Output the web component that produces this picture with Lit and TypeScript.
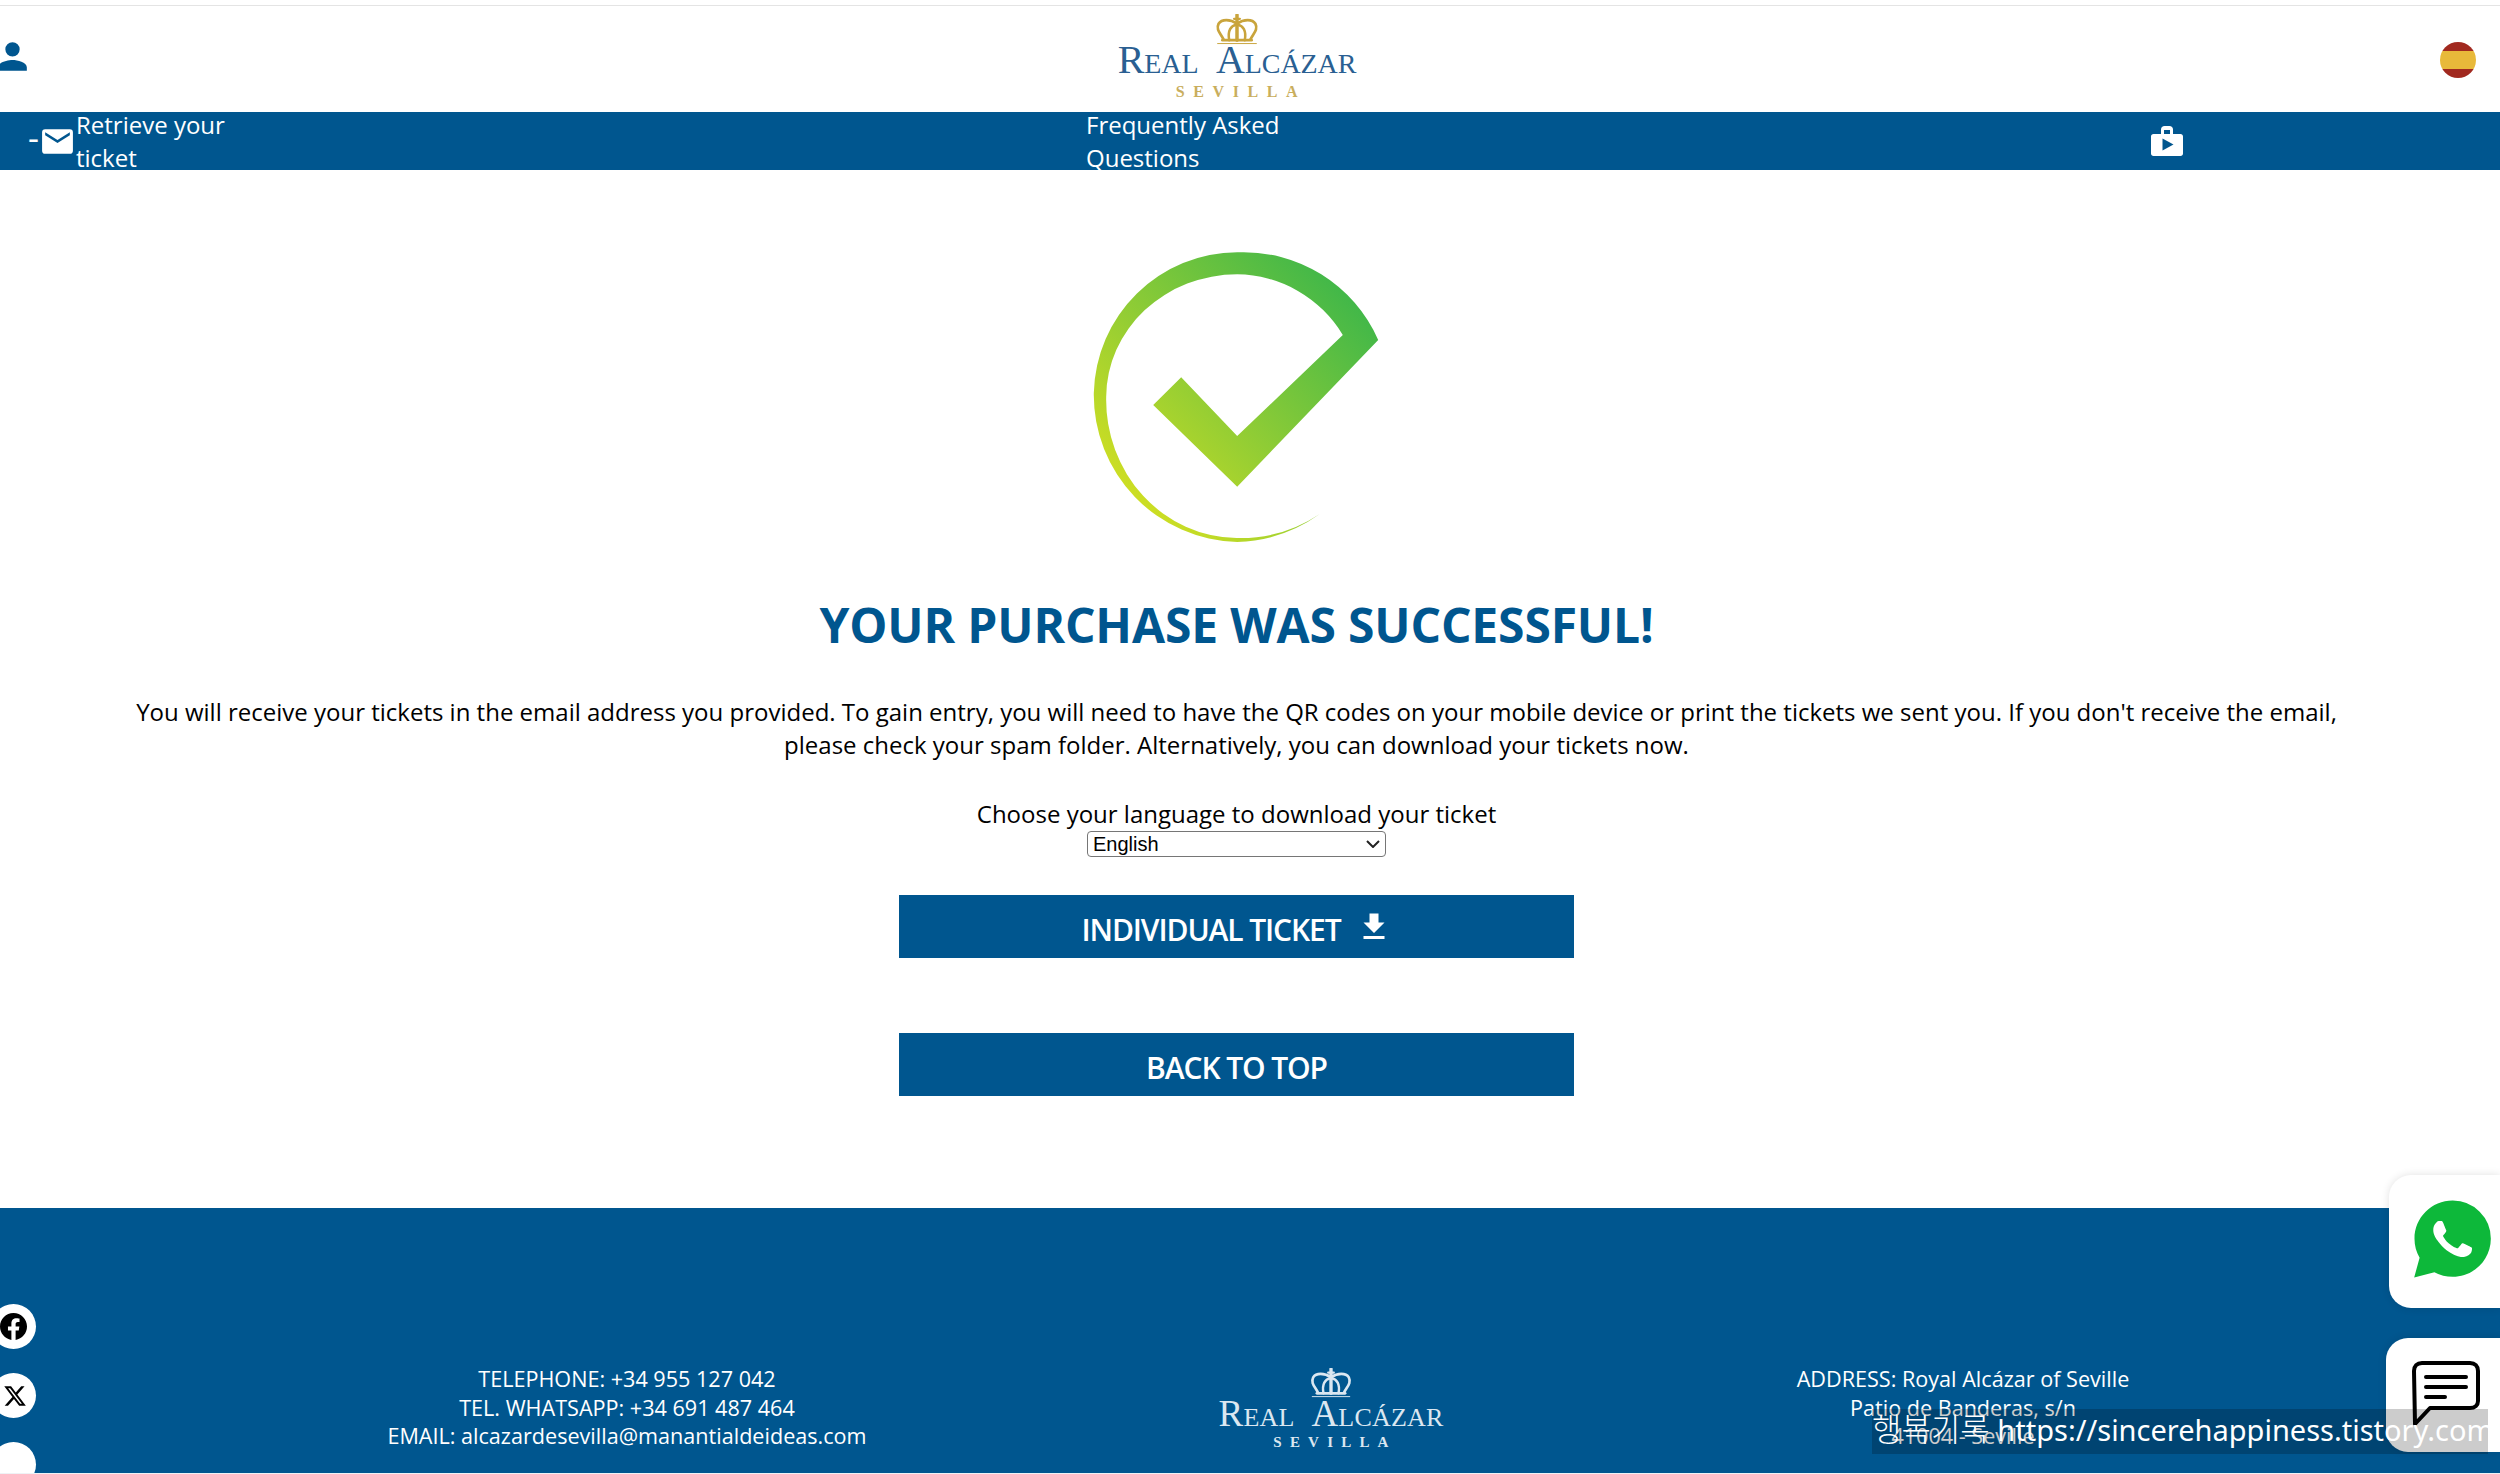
import { LitElement, html, css, svg } from "lit";
import { customElement } from "lit/decorators.js";

const crown = svg`
  <g fill="none" stroke="currentColor" stroke-linecap="round">
    <path d="M22 1v26" stroke-width="3.600"/>
    <path d="M19 5h6" stroke-width="2.400"/>
    <path d="M22 10C15 5 6 5 3 10c-3 6 2 10 5 16" stroke-width="2.800"/>
    <path d="M22 10c7-5 16-5 19 0 3 6-2 10-5 16" stroke-width="2.800"/>
    <path d="M21 11c-5 1-9 6-7 16" stroke-width="2.600"/>
    <path d="M23 11c5 1 9 6 7 16" stroke-width="2.600"/>
    <path d="M7 27h30" stroke-width="3"/>
    <path d="M2 30.500h40" stroke-width="1" />
  </g>`;

@customElement("app-root")
export class AppRoot extends LitElement {
  static styles = css`
    :host {
      display: block;
      height: 1474px;
      overflow: hidden;
      position: relative;
      background: #fff;
      font-family: "Open Sans", sans-serif;
      color: #000;
    }
    .page-gap { height: 5px; }
    .header {
      height: 106px;
      border-top: 1px solid #e4e4e4;
      display: grid;
      grid-template-columns: 1117px 240px 1fr;
      box-sizing: content-box;
    }
    .user { display: block; width: 43px; height: 43px; margin: 29px 0 0 -9px; fill: #00568f; }
    .flag {
      justify-self: end;
      width: 36px; height: 36px; margin: 36px 24px 0 0;
      border-radius: 50%;
      background: linear-gradient(#a1291f 0 25%, #e8b93a 25% 75%, #a1291f 75%);
    }
    .logo {
      display: flex; flex-direction: column; align-items: center;
      font-family: "Liberation Serif", serif;
    }
    .logo svg { display: block; }
    .logo .name { font-variant: small-caps; white-space: pre; line-height: 1; }
    .logo .city { line-height: 1; }
    .logo-top { color: #2a5f92; padding-top: 8px; }
    .logo-top svg { width: 44px; height: 31px; color: #c9a43c; }
    .logo-top .name { font-size: 40px; letter-spacing: -0.1px; margin-top: -5px; }
    .logo-top .city { font-size: 16px; letter-spacing: 8.6px; color: #c9ae5d; margin-top: 4px; padding-left: 8px; font-weight: bold; }
    .logo-foot { color: #dbe7f1; padding-top: 4px; }
    .logo-foot svg { width: 42px; height: 30px; }
    .logo-foot .name { font-size: 37px; letter-spacing: 0.2px; margin-top: -3px; }
    .logo-foot .city { font-size: 15px; letter-spacing: 8.2px; margin-top: 3px; padding-left: 8px; font-weight: bold; }

    .nav {
      height: 58px;
      background: #00568f;
      color: #fff;
      overflow: hidden;
      display: grid;
      grid-template-columns: 1058px 1064px 1fr;
      padding-left: 28px;
      font-size: 24px;
      line-height: 32.500px;
    }
    .nav-item { display: flex; align-items: flex-start; }
    .nav-text { width: 204px; margin-top: -3px; }
    .dash { margin-top: 9px; width: 11px; font-size: 34px; line-height: 32px; }
    .mail { width: 37px; height: 37px; fill: #fff; margin-top: 11px; flex: none; }
    .nav-bag { width: 32px; height: 30px; margin: 14px 0 0 1px; display: block; }

    .main {
      padding: 60px 27px 0 0;
      height: 1038px;
      box-sizing: border-box;
      display: flex; flex-direction: column; align-items: center;
    }
    .check { display: block; width: 340px; height: 330px; }
    h1 {
      margin: 33px 0 0;
      font-size: 48px; line-height: 64px; font-weight: 700;
      letter-spacing: -0.15px;
      color: #00568f; text-align: center;
    }
    .lead {
      margin: 38px 0 0;
      width: 2230px;
      font-size: 24px; line-height: 33px; text-align: center;
    }
    .choose { margin-top: 36px; font-size: 24px; line-height: 33px; text-align: center; }
    .select-wrap { position: relative; width: 299px; height: 26px; margin-top: 1px; }
    select {
      display: block;
      appearance: none;
      width: 299px; height: 26px;
      box-sizing: border-box;
      padding: 0 0 0 5px;
      font: 20px "Liberation Sans", sans-serif;
      background: #fff; color: #000;
      border: 1px solid #767676; border-radius: 4px;
    }
    .chev {
      position: absolute; right: 6px; top: 9px;
      width: 14px; height: 8px;
      pointer-events: none;
    }
    .btn {
      box-sizing: border-box;
      display: flex; align-items: center; justify-content: center;
      width: 675px; height: 63px;
      background: #00568f; color: #fff;
      font-size: 30px; font-weight: 600; letter-spacing: -1.100px;
      padding-top: 5px;
    }
    .btn svg { width: 36px; height: 36px; fill: #fff; margin: -5px 0 0 15px; }
    .btn-first { margin-top: 38px; }
    .btn-second { margin-top: 75px; }

    .footer {
      height: 265px;
      background: #00568f;
      color: #fff;
      display: flex;
      overflow: hidden;
      border-bottom: 1px solid #eef2f5;
      font-size: 21.600px; line-height: 28.500px;
      text-align: center;
    }
    .social {
      margin-left: -9px; width: 45px; flex: none;
      padding-top: 96px;
      display: flex; flex-direction: column; gap: 24px;
    }
    .round {
      width: 45px; height: 45px; flex: none; border-radius: 50%; background: #fff;
      display: flex; align-items: center; justify-content: center;
    }
    .round svg { display: block; fill: #000; }
    .fb { width: 27px; height: 27px; margin-left: -1px; }
    .xi { width: 24px; height: 24px; margin-left: 2px; }
    .contact { margin-left: 91px; width: 1000px; padding-top: 157px; flex: none; }
    .foot-logo { width: 408px; padding-top: 156px; flex: none; }
    .address { width: 856px; padding-top: 157px; flex: none; }

    .float {
      position: absolute; right: 0; background: #fff;
      border-radius: 22px 0 0 22px;
      box-shadow: 0 0 8px rgba(0, 0, 0, 0.12);
      display: flex; align-items: flex-start;
    }
    .wa { top: 1175px; width: 111px; height: 133px; }
    .wa svg { width: 77px; height: 78px; margin: 25px 0 0 25px; }
    .chat { top: 1338px; width: 114px; height: 114px; }
    .chat svg { width: 68px; height: 66px; margin: 23px 0 0 26px; }
    .mark {
      position: absolute; left: 1872px; top: 1409px;
      width: 616px; height: 45px;
      background: rgba(0, 0, 0, 0.2);
      color: #fff;
      font: 29px/40px "Noto Sans", "Noto Sans CJK KR", sans-serif;
      white-space: nowrap; overflow: hidden;
    }
    .mark span { font-size: 32px; font-weight: 300; }
  `;

  render() {
    return html`
      <div class="page-gap"></div>
      <header class="header">
        <div>
          <svg class="user" viewBox="0 0 24 24"><path d="M12 12a4 4 0 1 0 0-8 4 4 0 0 0 0 8zm0 2c-2.700 0-8 1.300-8 4v2h16v-2c0-2.700-5.300-4-8-4z"/></svg>
        </div>
        <div class="logo logo-top">
          <svg viewBox="0 0 44 32">${crown}</svg>
          <div class="name">Real  Alcázar</div>
          <div class="city">SEVILLA</div>
        </div>
        <div class="flag"></div>
      </header>
      <nav class="nav">
        <div class="nav-item">
          <span class="dash">-</span>
          <svg class="mail" viewBox="0 0 24 24"><path d="M20 4H4a2 2 0 0 0-2 2v12a2 2 0 0 0 2 2h16a2 2 0 0 0 2-2V6a2 2 0 0 0-2-2zm0 4-8 5-8-5V6l8 5 8-5v2z"/></svg>
          <span class="nav-text">Retrieve your ticket</span>
        </div>
        <div class="nav-item"><span class="nav-text">Frequently Asked Questions</span></div>
        <div class="nav-item">
          <svg class="nav-bag" viewBox="0 0 32 30">
            <path fill="#fff" fill-rule="evenodd" d="M10 8V3.500C10 1.500 11.500 0 13.500 0h5C20.500 0 22 1.500 22 3.500V8h7.500C31 8 32 9 32 10.500v17c0 1.500-1 2.500-2.500 2.500h-27C1 30 0 29 0 27.500v-17C0 9 1 8 2.500 8H10zm3-1.500V8h6V4h-6v2.500z"/>
            <path fill="#00568f" d="M11.500 12.500v12l11-6z"/>
          </svg>
        </div>
      </nav>
      <main class="main">
        <svg class="check" viewBox="6.500 0 340 330">
          <defs>
            <linearGradient id="g" gradientUnits="userSpaceOnUse" x1="300" y1="60" x2="70" y2="285">
              <stop offset="0" stop-color="#3cb64a"/>
              <stop offset="0.55" stop-color="#8fcc35"/>
              <stop offset="1" stop-color="#d4e021"/>
            </linearGradient>
          </defs>
          <path fill="url(#g)" d="M317.700 110A147 147 0 0 0 176.700 22.300A144 144 0 0 0 33.300 163A147 147 0 0 0 176.700 312A150 150 0 0 0 259.300 284A143 143 0 0 1 176 308A132 138 0 0 1 45.700 166.700A131 123 0 0 1 176.700 44.300A125 125 0 0 1 282.300 105L176.700 206L120.700 147.300L92.700 175L176.700 256.700Z"/>
        </svg>
        <h1>YOUR PURCHASE WAS SUCCESSFUL!</h1>
        <p class="lead">You will receive your tickets in the email address you provided. To gain entry, you will need to have the QR codes on your mobile device or print the tickets we sent you. If you don't receive the email, please check your spam folder. Alternatively, you can download your tickets now.</p>
        <div class="choose">Choose your language to download your ticket</div>
        <div class="select-wrap">
          <select><option>English</option></select>
          <svg class="chev" viewBox="0 0 14 8"><path d="M1 1l6 6 6-6" fill="none" stroke="#222" stroke-width="2"/></svg>
        </div>
        <div class="btn btn-first">INDIVIDUAL TICKET
          <svg viewBox="0 0 24 24"><path d="M19 9h-4V3H9v6H5l7 7 7-7zM5 18v2h14v-2H5z"/></svg>
        </div>
        <div class="btn btn-second">BACK TO TOP</div>
      </main>
      <footer class="footer">
        <div class="social">
          <div class="round"><svg class="fb" viewBox="0 0 24 24"><path d="M24 12.073c0-6.627-5.373-12-12-12s-12 5.373-12 12c0 5.990 4.388 10.954 10.125 11.854v-8.385H7.078v-3.470h3.047V9.430c0-3.007 1.792-4.669 4.533-4.669 1.312 0 2.686.235 2.686.235v2.953H15.830c-1.491 0-1.956.925-1.956 1.874v2.250h3.328l-.532 3.470h-2.796v8.385C19.612 23.027 24 18.062 24 12.073z"/></svg></div>
          <div class="round"><svg class="xi" viewBox="0 0 24 24"><path d="M18.244 2.250h3.308l-7.227 8.260 8.502 11.240H16.170l-5.214-6.817L4.990 21.750H1.680l7.730-8.835L1.254 2.250H8.080l4.713 6.231zm-1.161 17.520h1.833L7.084 4.126H5.117z"/></svg></div>
          <div class="round"></div>
        </div>
        <div class="contact">
          TELEPHONE: +34 955 127 042<br>TEL. WHATSAPP: +34 691 487 464<br>EMAIL: alcazardesevilla@manantialdeideas.com
        </div>
        <div class="foot-logo">
          <div class="logo logo-foot">
            <svg viewBox="0 0 44 32">${crown}</svg>
            <div class="name">Real  Alcázar</div>
            <div class="city">SEVILLA</div>
          </div>
        </div>
        <div class="address">
          ADDRESS: Royal Alcázar of Seville<br>Patio de Banderas, s/n<br>41004 - Seville
        </div>
      </footer>
      <div class="float wa">
        <svg viewBox="0 0 24 24">
          <path fill="#0db83a" d="M20.463 3.488A11.815 11.815 0 0 0 12.050 0C5.495 0 .16 5.335.157 11.892c0 2.096.547 4.142 1.588 5.945L.057 24l6.305-1.654a11.882 11.882 0 0 0 5.683 1.448h.005c6.554 0 11.890-5.335 11.893-11.893a11.821 11.821 0 0 0-3.480-8.413Z"/>
          <path fill="#fff" d="M17.472 14.382c-.297-.149-1.758-.867-2.030-.967-.273-.099-.471-.148-.670.150-.197.297-.767.966-.940 1.164-.173.199-.347.223-.644.075-.297-.150-1.255-.463-2.390-1.475-.883-.788-1.480-1.761-1.653-2.059-.173-.297-.018-.458.130-.606.134-.133.298-.347.446-.520.149-.174.198-.298.298-.497.099-.198.050-.371-.025-.520-.075-.149-.669-1.612-.916-2.207-.242-.579-.487-.500-.669-.510-.173-.008-.371-.010-.570-.010-.198 0-.520.074-.792.372-.272.297-1.040 1.016-1.040 2.479 0 1.462 1.065 2.875 1.213 3.074.149.198 2.096 3.200 5.077 4.487.709.306 1.262.489 1.694.625.712.227 1.360.195 1.871.118.571-.085 1.758-.719 2.006-1.413.248-.694.248-1.289.173-1.413-.074-.124-.272-.198-.570-.347"/>
        </svg>
      </div>
      <div class="float chat">
        <svg viewBox="0 0 68 66" fill="none" stroke="#000" stroke-width="4" stroke-linecap="round" stroke-linejoin="round">
          <path d="M2 10C2 5 5 2 10 2h48c5 0 8 3 8 8v30c0 4-3 7-8 7H18L3 63Z"/>
          <path d="M14 16h40M14 26h40M14 36h19"/>
        </svg>
      </div>
      <div class="mark"><span>행복기록</span> https://sincerehappiness.tistory.com</div>
    `;
  }
}
